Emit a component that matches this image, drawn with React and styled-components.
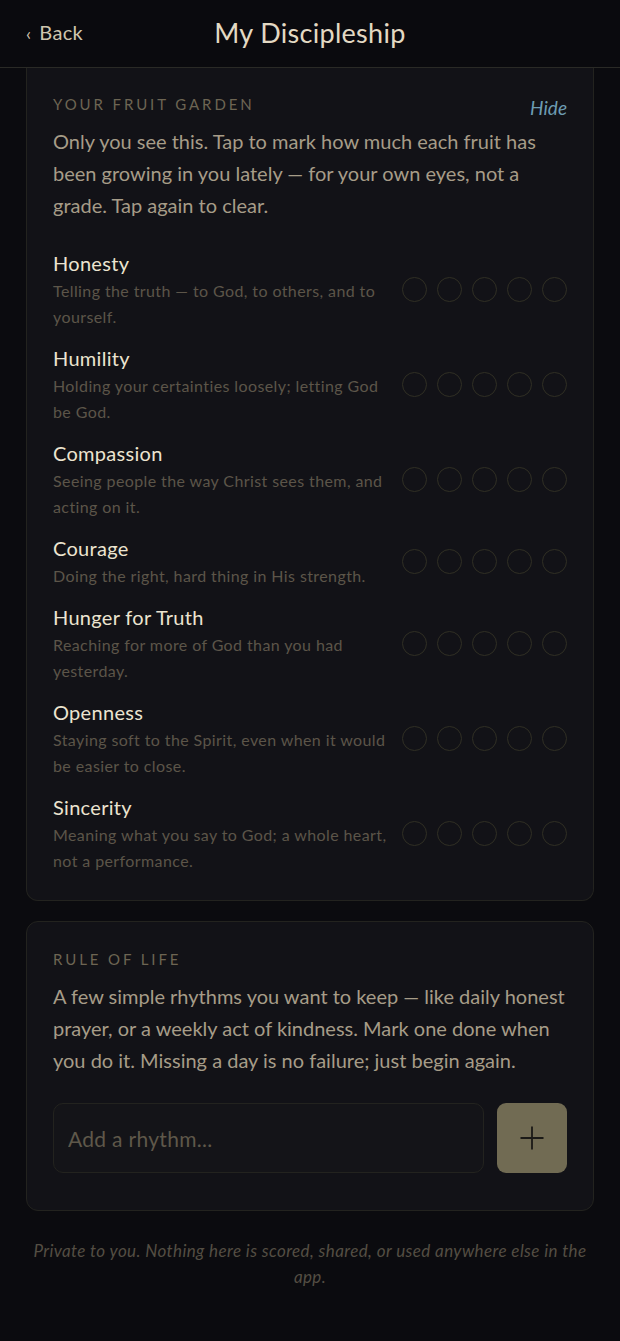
import styled, { createGlobalStyle } from 'styled-components'

const GlobalStyle = createGlobalStyle`
  html, body {
    margin: 0;
    padding: 0;
    background: #0b0b0f;
  }
  body {
    font-family: Lato, "Open Sans", sans-serif;
    -webkit-font-smoothing: antialiased;
  }
  * { box-sizing: border-box; }
`

const FRUITS = [
  { name: 'Honesty', text: 'Telling the truth — to God, to others, and to yourself.' },
  { name: 'Humility', text: 'Holding your certainties loosely; letting God be God.' },
  { name: 'Compassion', text: 'Seeing people the way Christ sees them, and acting on it.' },
  { name: 'Courage', text: 'Doing the right, hard thing in His strength.' },
  { name: 'Hunger for Truth', text: 'Reaching for more of God than you had yesterday.' },
  { name: 'Openness', text: 'Staying soft to the Spirit, even when it would be easier to close.' },
  { name: 'Sincerity', text: 'Meaning what you say to God; a whole heart, not a performance.' },
]

const Screen = styled.div`
  min-height: 1341px;
  background: #0b0b0f;
`

const Header = styled.header`
  height: 68px;
  display: grid;
  grid-template-columns: 1fr auto 1fr;
  align-items: center;
  padding: 0 26px 3px;
  background: #0a0a0e;
  border-bottom: 1px solid #2a2a26;
`

const Back = styled.a`
  justify-self: start;
  color: #cfc5ae;
  font-size: 20px;
  letter-spacing: 0.3px;
  text-decoration: none;
  span {
    font-size: 18px;
    margin-right: 8px;
  }
`

const Title = styled.h1`
  margin: 0;
  color: #e3d9c3;
  font-size: 27px;
  font-weight: 400;
  letter-spacing: 0.3px;
`

const Main = styled.main`
  display: flex;
  flex-direction: column;
  gap: 20px;
  padding: 0 26px;
`

const Card = styled.section`
  background: #121217;
  border: 1px solid #23231f;
  border-radius: 12px;
  padding: 26px 26px ${p => p.$bottom || 26}px;
  ${p => p.$clipped && `
    padding-top: 25px;
    border-top: none;
    border-top-left-radius: 0;
    border-top-right-radius: 0;
  `}
`

const CardHead = styled.div`
  display: flex;
  justify-content: space-between;
  align-items: flex-start;
`

const Eyebrow = styled.h2`
  margin: 0;
  color: #6d6553;
  font-size: 15px;
  line-height: 22px;
  font-weight: 400;
  letter-spacing: 2.9px;
  text-transform: uppercase;
`

const Hide = styled.button`
  margin: 4px 0 -4px;
  padding: 0;
  border: none;
  background: none;
  color: #6d9cb3;
  font-family: inherit;
  font-size: 19px;
  line-height: 22px;
  font-style: italic;
  cursor: pointer;
`

const Intro = styled.p`
  margin: 10px 0 0;
  color: #a69c88;
  font-size: 20px;
  line-height: 32px;
`

const FruitList = styled.ul`
  list-style: none;
  margin: 27px 0 0;
  padding: 0;
  display: flex;
  flex-direction: column;
  gap: 13px;
`

const FruitRow = styled.li`
  display: grid;
  grid-template-columns: 1fr auto;
  column-gap: 12px;
  align-items: center;
`

const FruitName = styled.div`
  color: #ece4d0;
  font-size: 20px;
  line-height: 30px;
  letter-spacing: 0.3px;
`

const FruitText = styled.div`
  color: #5c5549;
  font-size: 16px;
  line-height: 26px;
  letter-spacing: 0.4px;
`

const Dots = styled.div`
  display: flex;
  gap: 10px;
`

const Dot = styled.button`
  width: 25px;
  height: 25px;
  padding: 0;
  border-radius: 50%;
  border: 1.5px solid #302f24;
  background: transparent;
  cursor: pointer;
`

const AddRow = styled.form`
  display: flex;
  gap: 13px;
  margin-top: 27px;
`

const Input = styled.input`
  flex: 1;
  min-width: 0;
  height: 70px;
  padding: 0 14px;
  background: #141418;
  border: 1px solid #23231f;
  border-radius: 10px;
  color: #cfc5ae;
  font-family: inherit;
  font-size: 21px;
  letter-spacing: 0.3px;
  outline: none;
  &::placeholder { color: #5f584a; }
`

const AddButton = styled.button`
  width: 70px;
  height: 70px;
  flex: none;
  display: grid;
  place-items: center;
  padding: 0;
  border: none;
  border-radius: 9px;
  background: #716b53;
  cursor: pointer;
`

const Footnote = styled.p`
  margin: 27px 26px 0;
  padding-bottom: 50px;
  color: #544e43;
  font-size: 17px;
  line-height: 26px;
  letter-spacing: 0.4px;
  font-style: italic;
  text-align: center;
`

const Plus = () =>
  <svg width='26' height='26' viewBox='0 0 26 26' fill='none'>
    <path d='M13 1.5v23M1.5 13h23' stroke='#1b1a17' strokeWidth='1.8' />
  </svg>

export default function App () {
  return (
    <Screen>
      <GlobalStyle />
      <Header>
        <Back href='#'><span>‹</span>Back</Back>
        <Title>My Discipleship</Title>
      </Header>
      <Main>
        <Card $clipped>
          <CardHead>
            <Eyebrow>Your Fruit Garden</Eyebrow>
            <Hide type='button'>Hide</Hide>
          </CardHead>
          <Intro>
            Only you see this. Tap to mark how much each fruit has been growing
            in you lately — for your own eyes, not a grade. Tap again to clear.
          </Intro>
          <FruitList>
            {FRUITS.map(f => (
              <FruitRow key={f.name}>
                <div>
                  <FruitName>{f.name}</FruitName>
                  <FruitText>{f.text}</FruitText>
                </div>
                <Dots>
                  {[1, 2, 3, 4, 5].map(n =>
                    <Dot key={n} type='button' aria-label={`${f.name} ${n}`} />
                  )}
                </Dots>
              </FruitRow>
            ))}
          </FruitList>
        </Card>
        <Card $bottom={37}>
          <Eyebrow>Rule of Life</Eyebrow>
          <Intro>
            A few simple rhythms you want to keep — like daily honest prayer, or
            a weekly act of kindness. Mark one done when you do it. Missing a day
            is no failure; just begin again.
          </Intro>
          <AddRow onSubmit={e => e.preventDefault()}>
            <Input placeholder='Add a rhythm...' />
            <AddButton type='submit' aria-label='Add rhythm'><Plus /></AddButton>
          </AddRow>
        </Card>
      </Main>
      <Footnote>
        Private to you. Nothing here is scored, shared, or used anywhere else in the app.
      </Footnote>
    </Screen>
  )
}
